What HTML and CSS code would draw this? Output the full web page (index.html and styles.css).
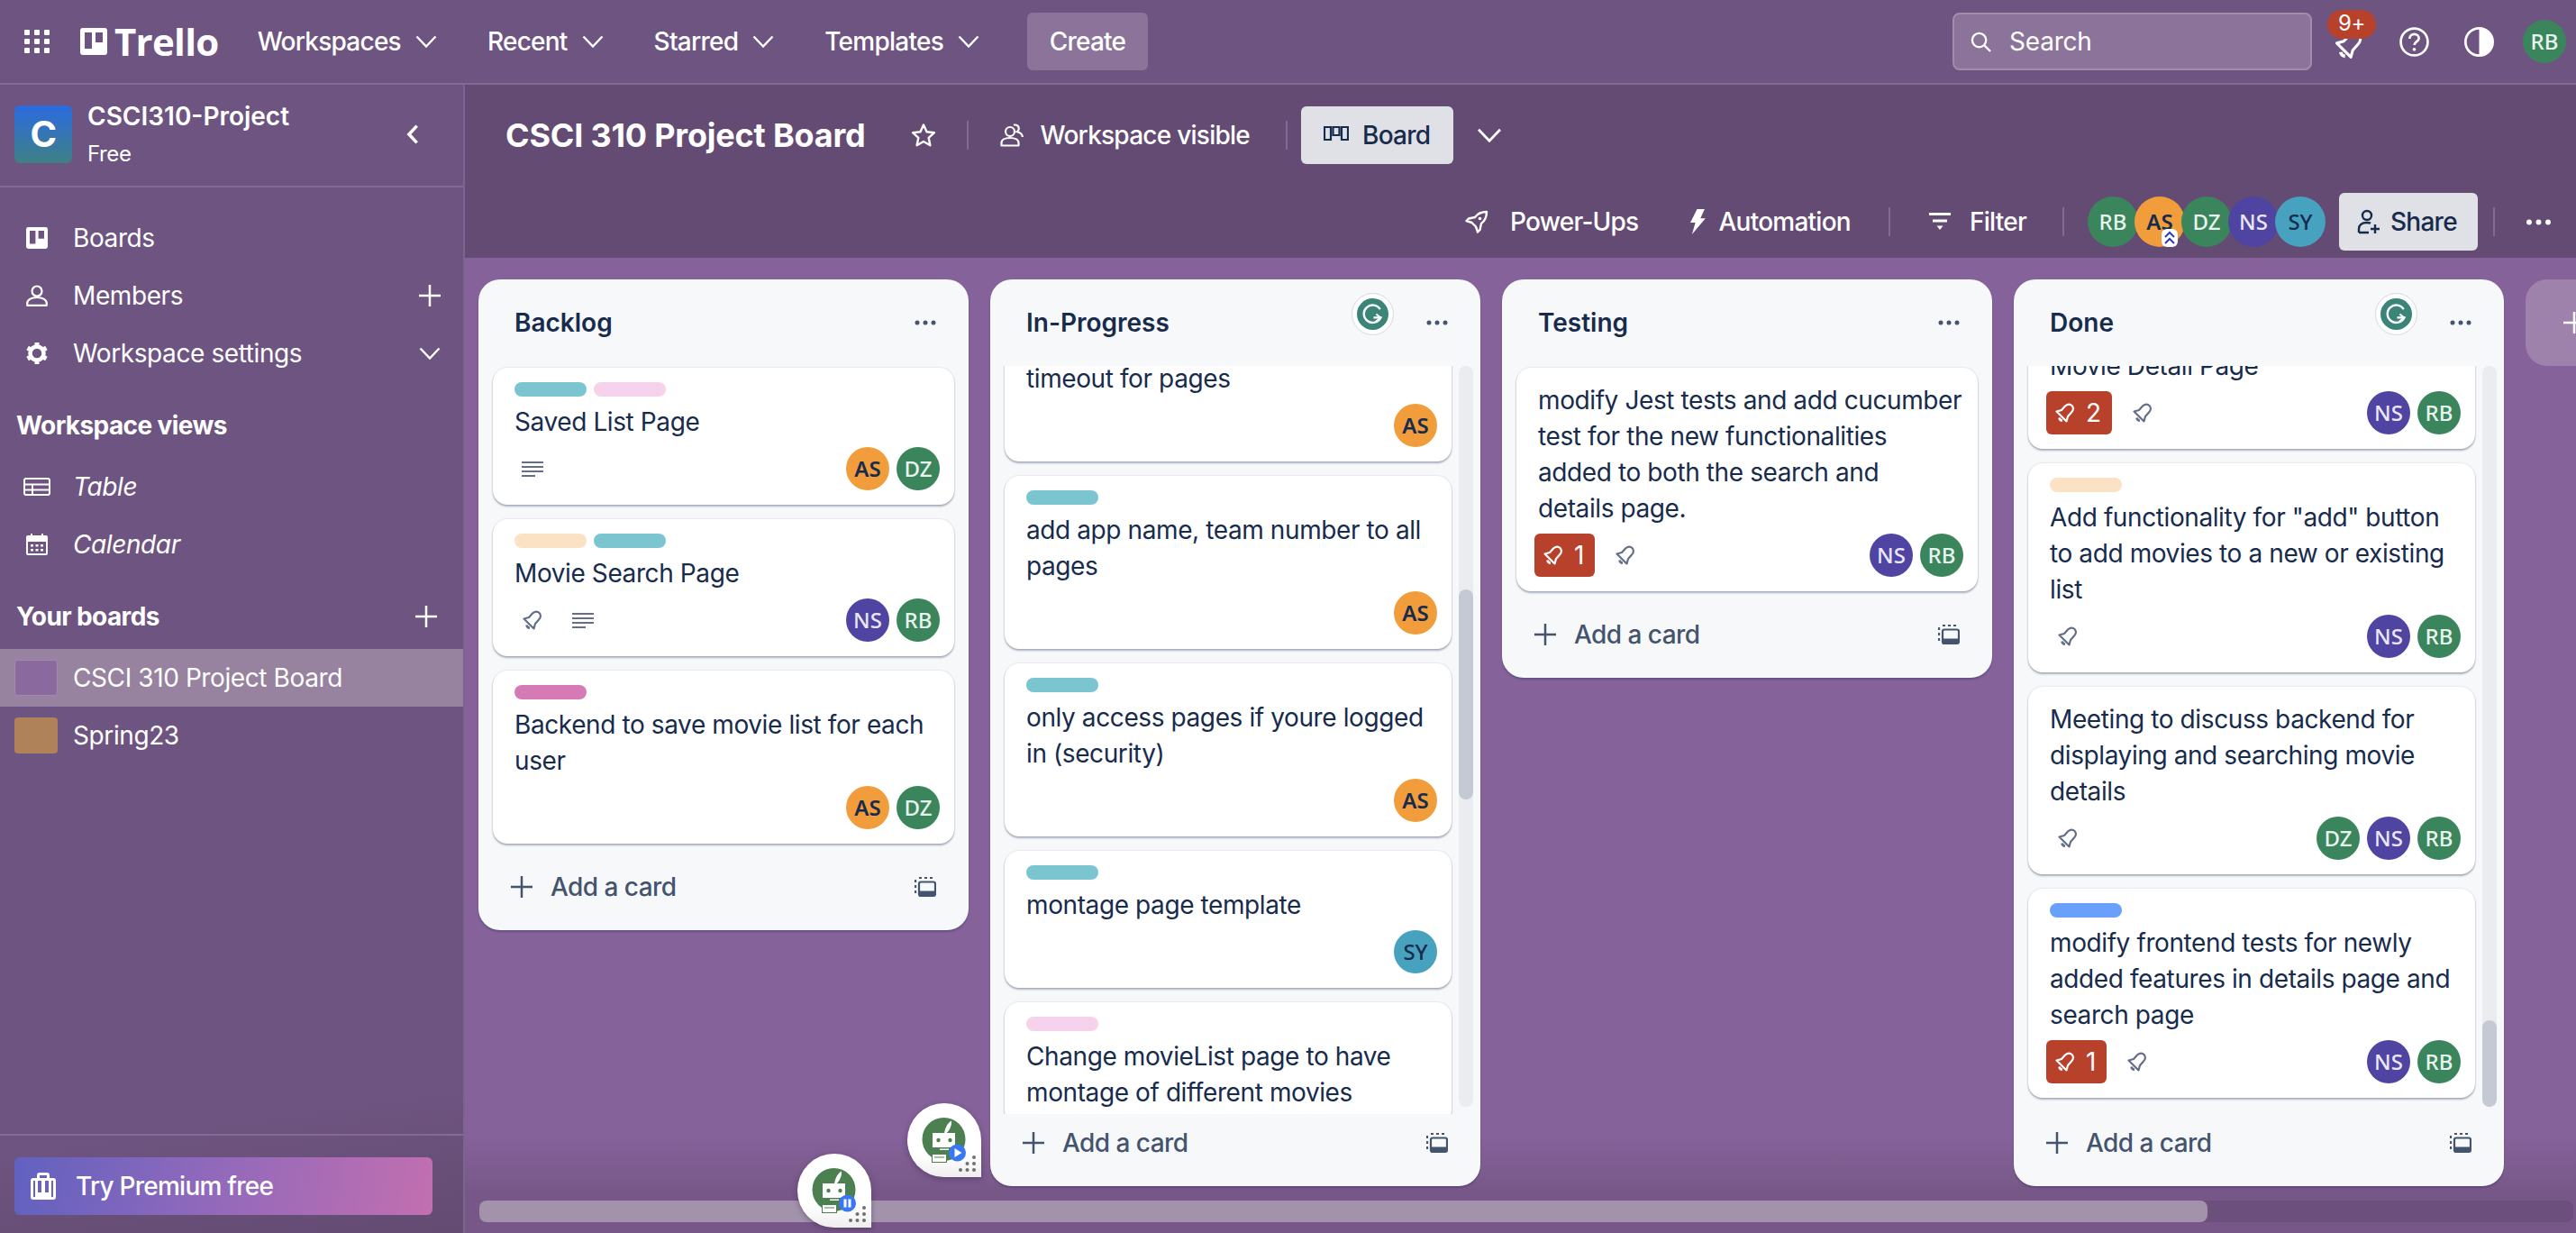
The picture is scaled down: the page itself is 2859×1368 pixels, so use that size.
FILE: index.html
```html
<!DOCTYPE html>
<html lang="en">

<head>
    <meta charset="UTF-8">
    <title>CSCI 310 Project Board | Trello</title>
    <link rel="stylesheet" href="styles.css">
</head>

<body>
    <!-- Icon sprite -->
    <svg class="sprite" xmlns="http://www.w3.org/2000/svg">
        <symbol id="i-chevron" viewBox="0 0 24 14"><path d="M1.500 1.500 12 12.500 22.500 1.500" fill="none" stroke="currentColor" stroke-width="2.400"/></symbol>
        <symbol id="i-plus" viewBox="0 0 24 24"><path d="M12 0v24M0 12h24" fill="none" stroke="currentColor" stroke-width="2.500"/></symbol>
        <symbol id="i-dots" viewBox="0 0 24 6"><circle cx="3" cy="3" r="2.500" fill="currentColor"/><circle cx="12" cy="3" r="2.500" fill="currentColor"/><circle cx="21" cy="3" r="2.500" fill="currentColor"/></symbol>
        <symbol id="i-bell" viewBox="0 0 24 24"><path d="M2.500 10.500 8 9l4-4.500c2.500-2.500 5.500-2.500 7.500-.5s2 5-.5 7.500L15 16l-1.500 5.500z" fill="none" stroke="currentColor" stroke-width="2.200" stroke-linejoin="round"/><path d="M5.500 17.500c.3 2 1.500 3 3.500 3.200" fill="none" stroke="currentColor" stroke-width="2.600"/></symbol>
        <symbol id="i-desc" viewBox="0 0 24 18"><path d="M0 2h24M0 7h24M0 12h24M0 17h15" fill="none" stroke="currentColor" stroke-width="2"/></symbol>
        <symbol id="i-template" viewBox="0 0 24 24"><rect x="5" y="6.500" width="18" height="15.500" rx="2" fill="none" stroke="currentColor" stroke-width="2.200"/><rect x="5" y="16.500" width="18" height="5.500" rx="1" fill="currentColor"/><path d="M1 4v3M1 10v3M1 16v3M5 2h3M11 2h3M17 2h3" fill="none" stroke="currentColor" stroke-width="2.200"/></symbol>
        <symbol id="i-mark" viewBox="0 0 30 30"><path fill-rule="evenodd" d="M3 0h24a3 3 0 0 1 3 3v24a3 3 0 0 1-3 3H3a3 3 0 0 1-3-3V3a3 3 0 0 1 3-3zm2 5v18h8V5zm12 0v11h8V5z" fill="currentColor"/></symbol>
        <symbol id="i-person" viewBox="0 0 24 24"><circle cx="12" cy="7" r="5.500" fill="none" stroke="currentColor" stroke-width="2.200"/><path d="M1.200 22.800v-2c0-4 4-6.800 10.800-6.800s10.800 2.800 10.800 6.800v2z" fill="none" stroke="currentColor" stroke-width="2.200" stroke-linejoin="round"/></symbol>
        <symbol id="i-gear" viewBox="0 0 24 24"><circle cx="12" cy="12" r="7.500" fill="none" stroke="currentColor" stroke-width="4.500"/><path d="M12 0v4M12 20v4M1.600 6l3.500 2M18.900 16l3.500 2M1.600 18l3.500-2M18.900 8l3.500-2" stroke="currentColor" stroke-width="5"/></symbol>
        <symbol id="i-table" viewBox="0 0 30 20"><rect x="1" y="1" width="28" height="18" rx="2" fill="none" stroke="currentColor" stroke-width="2"/><path d="M1 7.500h28M1 13.500h28M10 7.500v11" fill="none" stroke="currentColor" stroke-width="2"/></symbol>
        <symbol id="i-calendar" viewBox="0 0 24 24"><path fill-rule="evenodd" d="M2 2h3V0h2v2h10V0h2v2h3a2 2 0 0 1 2 2v18a2 2 0 0 1-2 2H2a2 2 0 0 1-2-2V4a2 2 0 0 1 2-2zm0 7v13h20V9z" fill="currentColor"/><path d="M5 12h3v2.500H5zm5.500 0h3v2.500h-3zm5.500 0h3v2.500h-3zM5 17h3v2.500H5zm5.500 0h3v2.500h-3zm5.500 0h3v2.500h-3z" fill="currentColor"/></symbol>
        <symbol id="i-search" viewBox="0 0 24 24"><circle cx="10" cy="10" r="8" fill="none" stroke="currentColor" stroke-width="2.400"/><path d="m16 16 7 7" stroke="currentColor" stroke-width="2.400"/></symbol>
        <symbol id="i-help" viewBox="0 0 32 32"><circle cx="16" cy="16" r="14.500" fill="none" stroke="currentColor" stroke-width="2.600"/><path d="M11 12.500c0-3 2.200-4.800 5-4.800s5 1.800 5 4.300c0 3.700-5 3.500-5 7.500" fill="none" stroke="currentColor" stroke-width="2.600"/><circle cx="16" cy="24" r="1.800" fill="currentColor"/></symbol>
        <symbol id="i-theme" viewBox="0 0 32 32"><circle cx="16" cy="16" r="14.700" fill="none" stroke="currentColor" stroke-width="2.600"/><path d="M16 1a15 15 0 0 1 0 30z" fill="currentColor"/></symbol>
        <symbol id="i-star" viewBox="0 0 28 28"><path d="m14 2.500 3.500 7.700 8.400 1-6.200 5.700 1.700 8.300L14 21l-7.400 4.200 1.700-8.300-6.200-5.700 8.400-1z" fill="none" stroke="currentColor" stroke-width="2.400" stroke-linejoin="round"/></symbol>
        <symbol id="i-people" viewBox="0 0 26 26"><circle cx="11" cy="9" r="5" fill="none" stroke="currentColor" stroke-width="2.200"/><path d="M1.500 24.500v-3c0-3.500 4-5.500 9.500-5.500s9.500 2 9.500 5.500v3z" fill="none" stroke="currentColor" stroke-width="2.200" stroke-linejoin="round"/><path d="M15 1.800c3-1 5.800 1 5.800 3.800 0 1.600-.8 3-2 3.600 3.600.8 6 2.800 6 5.800" fill="none" stroke="currentColor" stroke-width="2.200"/></symbol>
        <symbol id="i-board" viewBox="0 0 28 20"><path d="M1 1h7v14H1zM10.500 1h7v9h-7zM20 1h7v14h-7z" fill="none" stroke="currentColor" stroke-width="2.200"/></symbol>
        <symbol id="i-rocket" viewBox="0 0 26 26"><path d="M24 2c-6 0-10 2-13 6L4 9.500 1.500 12l6 2 4.500 4.500 2 6 2.500-2.500 1.500-7c4-3 6-7 6-13z" fill="none" stroke="currentColor" stroke-width="2.400" stroke-linejoin="round"/><circle cx="16.500" cy="9.500" r="1.800" fill="currentColor"/></symbol>
        <symbol id="i-bolt" viewBox="0 0 20 30"><path d="M10 0h9l-5 11h6L4 30l4-14H2z" fill="currentColor"/></symbol>
        <symbol id="i-filter" viewBox="0 0 24 20"><path d="M0 1.500h24M4 9h16" stroke="currentColor" stroke-width="3"/><path d="M8.500 14.500h7L12 19z" fill="currentColor"/></symbol>
        <symbol id="i-share" viewBox="0 0 26 28"><circle cx="11" cy="7" r="5" fill="none" stroke="currentColor" stroke-width="2.400"/><path d="M2 26v-4c0-4 3-7 9-7 1.500 0 3 .2 4 .8M2 26h11" fill="none" stroke="currentColor" stroke-width="2.400"/><path d="M20 17v10M15 22h10" stroke="currentColor" stroke-width="2.400"/></symbol>
        <symbol id="i-bag" viewBox="0 0 28 30"><path fill-rule="evenodd" d="M3 6h4V3a3 3 0 0 1 3-3h8a3 3 0 0 1 3 3v3h4a3 3 0 0 1 3 3v18a3 3 0 0 1-3 3H3a3 3 0 0 1-3-3V9a3 3 0 0 1 3-3zm7-3v3h8V3zM3 9v18h2V9zm5 0v13h4V9zm8 0v13h4V9zm7 0v18h2V9z" fill="currentColor"/></symbol>
        <symbol id="i-robot" viewBox="0 0 81 82"><circle cx="40.500" cy="40" r="24" fill="#4c8050"/><path d="M41 34c.5-6 3.500-12 8-14.500.5 5-2 11-6.500 14.500z" fill="#fff"/><rect x="28" y="33" width="25" height="16" fill="#fff"/><circle cx="34.500" cy="41" r="2.200" fill="#4c8050"/><circle cx="47.500" cy="41" r="2.200" fill="#4c8050"/><rect x="36" y="50.500" width="10" height="1.500" fill="#fff"/><rect x="27.500" y="56.500" width="16" height="9" fill="#fff" stroke="#4c8050" stroke-width="1"/><path d="M30 60h11" stroke="#4c8050"/><g fill="#6f6f6f"><circle cx="74" cy="60" r="2"/><circle cx="66.500" cy="67" r="2"/><circle cx="74" cy="67" r="2"/><circle cx="59" cy="74" r="2"/><circle cx="66.500" cy="74" r="2"/><circle cx="74" cy="74" r="2"/></g><circle cx="55.500" cy="55" r="9.500" fill="#3978f2"/></symbol>
    </svg>

    <header class="topbar">
        <div class="app-grid"><i></i><i></i><i></i><i></i><i></i><i></i><i></i><i></i><i></i></div>
        <div class="logo">
            <svg class="logo-mark"><use href="#i-mark"/></svg>
            <span class="logo-text">Trello</span>
        </div>
        <nav class="topnav">
            <span class="topnav-item">Workspaces <svg class="chevron"><use href="#i-chevron"/></svg></span>
            <span class="topnav-item">Recent <svg class="chevron"><use href="#i-chevron"/></svg></span>
            <span class="topnav-item">Starred <svg class="chevron"><use href="#i-chevron"/></svg></span>
            <span class="topnav-item">Templates <svg class="chevron"><use href="#i-chevron"/></svg></span>
        </nav>
        <button class="create-btn">Create</button>

        <div class="search">
            <svg class="search-icon"><use href="#i-search"/></svg>
            <span>Search</span>
        </div>
        <div class="top-icon bell-wrap">
            <svg class="icon-bell-top"><use href="#i-bell"/></svg>
            <span class="notify-count">9+</span>
        </div>
        <div class="top-icon"><svg class="icon-32"><use href="#i-help"/></svg></div>
        <div class="top-icon"><svg class="icon-32"><use href="#i-theme"/></svg></div>
        <span class="avatar avatar-green avatar-me">RB</span>
    </header>

    <div class="main">
        <aside class="sidebar">
            <div class="side-head">
                <div class="ws-tile">C</div>
                <div class="ws-info">
                    <div class="ws-name">CSCI310-Project</div>
                    <div class="ws-plan">Free</div>
                </div>
                <div class="collapse-btn"><svg class="collapse-icon" viewBox="0 0 12 20"><path d="M10 2 2.500 10l7.500 8" fill="none" stroke="currentColor" stroke-width="3"/></svg></div>
            </div>

            <div class="side-nav">
                <div class="side-row"><svg class="side-icon"><use href="#i-mark"/></svg>Boards</div>
                <div class="side-row"><svg class="side-icon"><use href="#i-person"/></svg>Members<svg class="side-end"><use href="#i-plus"/></svg></div>
                <div class="side-row"><svg class="side-icon"><use href="#i-gear"/></svg>Workspace settings<svg class="side-end side-end-chevron"><use href="#i-chevron"/></svg></div>

                <div class="side-title">Workspace views</div>
                <div class="side-row side-italic"><svg class="side-icon side-icon-wide"><use href="#i-table"/></svg>Table</div>
                <div class="side-row side-italic"><svg class="side-icon"><use href="#i-calendar"/></svg>Calendar</div>

                <div class="side-title">Your boards<svg class="side-end side-end-title"><use href="#i-plus"/></svg></div>
                <div class="side-row board-row board-row-active"><span class="board-tile tile-purple"></span>CSCI 310 Project Board</div>
                <div class="side-row board-row"><span class="board-tile tile-tan"></span>Spring23</div>
            </div>

            <div class="side-foot">
                <div class="premium-btn"><svg class="premium-icon"><use href="#i-bag"/></svg>Try Premium free</div>
            </div>
        </aside>

        <section class="board">
            <div class="board-head">
                <div class="head-row">
                    <h1 class="board-name">CSCI 310 Project Board</h1>
                    <svg class="star-icon"><use href="#i-star"/></svg>
                    <span class="head-divider divider-star"></span>
                    <svg class="people-icon"><use href="#i-people"/></svg>
                    <span class="head-text">Workspace visible</span>
                    <span class="head-divider divider-visible"></span>
                    <div class="board-btn"><svg class="board-icon"><use href="#i-board"/></svg>Board</div>
                    <svg class="chevron view-chevron"><use href="#i-chevron"/></svg>
                </div>
                <div class="head-row head-row-right">
                    <svg class="tool-icon"><use href="#i-rocket"/></svg>
                    <span class="head-text">Power-Ups</span>
                    <svg class="bolt-icon"><use href="#i-bolt"/></svg>
                    <span class="head-text">Automation</span>
                    <span class="head-divider divider-auto"></span>
                    <svg class="tool-icon filter-icon"><use href="#i-filter"/></svg>
                    <span class="head-text">Filter</span>
                    <span class="head-divider divider-filter"></span>
                    <div class="member-stack">
                        <span class="avatar avatar-green">RB</span>
                        <span class="avatar avatar-orange">AS
                            <span class="admin-badge"><svg viewBox="0 0 14 16"><path d="M2 7l5-5 5 5M2 14l5-5 5 5" fill="none" stroke="#2a3fb0" stroke-width="2"/></svg></span>
                        </span>
                        <span class="avatar avatar-green">DZ</span>
                        <span class="avatar avatar-purple">NS</span>
                        <span class="avatar avatar-teal">SY</span>
                    </div>
                    <div class="share-btn"><svg class="share-icon"><use href="#i-share"/></svg>Share</div>
                    <span class="head-divider divider-share"></span>
                    <svg class="head-dots"><use href="#i-dots"/></svg>
                </div>
            </div>

            <div class="canvas">
                <!-- Backlog -->
                <div class="list">
                    <div class="list-head"><span class="list-title">Backlog</span><svg class="list-dots"><use href="#i-dots"/></svg></div>
                    <div class="cards">
                        <div class="card">
                            <div class="labels"><span class="label l-teal"></span><span class="label l-pink"></span></div>
                            <div class="card-title">Saved List Page</div>
                            <div class="card-meta">
                                <div class="badges"><svg class="desc-icon"><use href="#i-desc"/></svg></div>
                                <div class="members"><span class="avatar avatar-orange">AS</span><span class="avatar avatar-green">DZ</span></div>
                            </div>
                        </div>
                        <div class="card">
                            <div class="labels"><span class="label l-peach"></span><span class="label l-teal"></span></div>
                            <div class="card-title">Movie Search Page</div>
                            <div class="card-meta">
                                <div class="badges"><svg class="bell-icon"><use href="#i-bell"/></svg><svg class="desc-icon"><use href="#i-desc"/></svg></div>
                                <div class="members"><span class="avatar avatar-purple">NS</span><span class="avatar avatar-green">RB</span></div>
                            </div>
                        </div>
                        <div class="card">
                            <div class="labels"><span class="label l-magenta"></span></div>
                            <div class="card-title">Backend to save movie list for each user</div>
                            <div class="card-meta">
                                <div class="badges"></div>
                                <div class="members"><span class="avatar avatar-orange">AS</span><span class="avatar avatar-green">DZ</span></div>
                            </div>
                        </div>
                    </div>
                    <div class="add-card"><svg class="add-plus"><use href="#i-plus"/></svg><span>Add a card</span><svg class="add-template"><use href="#i-template"/></svg></div>
                </div>

                <!-- In-Progress -->
                <div class="list list-tall">
                    <div class="list-head"><span class="list-title">In-Progress</span><svg class="list-dots"><use href="#i-dots"/></svg></div>
                    <div class="grammar-btn"><svg viewBox="0 0 36 36"><circle cx="18" cy="18" r="18" fill="#3a8577"/><path d="M26.500 12.500A10 10 0 1 0 27 22h-8" fill="none" stroke="#fff" stroke-width="2.500"/><path d="m22 18 5 4-5 4" fill="none" stroke="#fff" stroke-width="2"/></svg></div>
                    <div class="list-body">
                        <div class="cards cards-scroll progress-cards">
                            <div class="card">
                                <div class="card-title">timeout for pages</div>
                                <div class="card-meta">
                                    <div class="badges"></div>
                                    <div class="members"><span class="avatar avatar-orange">AS</span></div>
                                </div>
                            </div>
                            <div class="card">
                                <div class="labels"><span class="label l-teal"></span></div>
                                <div class="card-title">add app name, team number to all pages</div>
                                <div class="card-meta">
                                    <div class="badges"></div>
                                    <div class="members"><span class="avatar avatar-orange">AS</span></div>
                                </div>
                            </div>
                            <div class="card">
                                <div class="labels"><span class="label l-teal"></span></div>
                                <div class="card-title">only access pages if youre logged in (security)</div>
                                <div class="card-meta">
                                    <div class="badges"></div>
                                    <div class="members"><span class="avatar avatar-orange">AS</span></div>
                                </div>
                            </div>
                            <div class="card">
                                <div class="labels"><span class="label l-teal"></span></div>
                                <div class="card-title">montage page template</div>
                                <div class="card-meta">
                                    <div class="badges"></div>
                                    <div class="members"><span class="avatar avatar-teal">SY</span></div>
                                </div>
                            </div>
                            <div class="card">
                                <div class="labels"><span class="label l-pink"></span></div>
                                <div class="card-title">Change movieList page to have montage of different movies</div>
                            </div>
                        </div>
                        <div class="scroll-track"><div class="scroll-thumb thumb-progress"></div></div>
                    </div>
                    <div class="add-card"><svg class="add-plus"><use href="#i-plus"/></svg><span>Add a card</span><svg class="add-template"><use href="#i-template"/></svg></div>
                </div>

                <!-- Testing -->
                <div class="list">
                    <div class="list-head"><span class="list-title">Testing</span><svg class="list-dots"><use href="#i-dots"/></svg></div>
                    <div class="cards">
                        <div class="card card-nolabel">
                            <div class="card-title">modify Jest tests and add cucumber test for the new functionalities added to both the search and<br>details page.</div>
                            <div class="card-meta">
                                <div class="badges"><span class="due-badge"><svg class="bell-small"><use href="#i-bell"/></svg>1</span><svg class="bell-icon"><use href="#i-bell"/></svg></div>
                                <div class="members"><span class="avatar avatar-purple">NS</span><span class="avatar avatar-green">RB</span></div>
                            </div>
                        </div>
                    </div>
                    <div class="add-card"><svg class="add-plus"><use href="#i-plus"/></svg><span>Add a card</span><svg class="add-template"><use href="#i-template"/></svg></div>
                </div>

                <!-- Done -->
                <div class="list list-tall">
                    <div class="list-head"><span class="list-title">Done</span><svg class="list-dots"><use href="#i-dots"/></svg></div>
                    <div class="grammar-btn"><svg viewBox="0 0 36 36"><circle cx="18" cy="18" r="18" fill="#3a8577"/><path d="M26.500 12.500A10 10 0 1 0 27 22h-8" fill="none" stroke="#fff" stroke-width="2.500"/><path d="m22 18 5 4-5 4" fill="none" stroke="#fff" stroke-width="2"/></svg></div>
                    <div class="list-body">
                        <div class="cards cards-scroll done-cards">
                            <div class="card card-nolabel">
                                <div class="card-title">Movie Detail Page</div>
                                <div class="card-meta">
                                    <div class="badges"><span class="due-badge"><svg class="bell-small"><use href="#i-bell"/></svg>2</span><svg class="bell-icon"><use href="#i-bell"/></svg></div>
                                    <div class="members"><span class="avatar avatar-purple">NS</span><span class="avatar avatar-green">RB</span></div>
                                </div>
                            </div>
                            <div class="card">
                                <div class="labels"><span class="label l-peach"></span></div>
                                <div class="card-title">Add functionality for "add" button to add movies to a new or existing list</div>
                                <div class="card-meta">
                                    <div class="badges"><svg class="bell-icon"><use href="#i-bell"/></svg></div>
                                    <div class="members"><span class="avatar avatar-purple">NS</span><span class="avatar avatar-green">RB</span></div>
                                </div>
                            </div>
                            <div class="card card-nolabel">
                                <div class="card-title">Meeting to discuss backend for displaying and searching movie details</div>
                                <div class="card-meta">
                                    <div class="badges"><svg class="bell-icon"><use href="#i-bell"/></svg></div>
                                    <div class="members"><span class="avatar avatar-green">DZ</span><span class="avatar avatar-purple">NS</span><span class="avatar avatar-green">RB</span></div>
                                </div>
                            </div>
                            <div class="card">
                                <div class="labels"><span class="label l-blue"></span></div>
                                <div class="card-title">modify frontend tests for newly added features in details page and search page</div>
                                <div class="card-meta">
                                    <div class="badges"><span class="due-badge"><svg class="bell-small"><use href="#i-bell"/></svg>1</span><svg class="bell-icon"><use href="#i-bell"/></svg></div>
                                    <div class="members"><span class="avatar avatar-purple">NS</span><span class="avatar avatar-green">RB</span></div>
                                </div>
                            </div>
                        </div>
                        <div class="scroll-track"><div class="scroll-thumb thumb-done"></div></div>
                    </div>
                    <div class="add-card"><svg class="add-plus"><use href="#i-plus"/></svg><span>Add a card</span><svg class="add-template"><use href="#i-template"/></svg></div>
                </div>

                <div class="add-list"><svg class="add-list-plus"><use href="#i-plus"/></svg></div>

                <div class="board-scroll"><div class="board-scroll-thumb"></div></div>
            </div>
        </section>
    </div>

    <!-- Floating extension buttons -->
    <div class="bot bot-play">
        <svg class="bot-art" viewBox="0 0 81 82"><use href="#i-robot"/><path d="M52.500 50v10l8-5z" fill="#fff"/></svg>
    </div>
    <div class="bot bot-pause">
        <svg class="bot-art" viewBox="0 0 81 82"><use href="#i-robot"/><path d="M51.500 50.500h3v9h-3zM56.500 50.500h3v9h-3z" fill="#fff"/></svg>
    </div>
</body>

</html>
```

FILE: styles.css
```css
/* Basic Reset */
* {
    margin: 0;
    padding: 0;
    box-sizing: border-box;
}

body {
    width: 2859px;
    height: 1368px;
    overflow: hidden;
    position: relative;
    display: flex;
    flex-direction: column;
    font-family: 'Inter', 'Liberation Sans', sans-serif;
    font-size: 28px;
    line-height: 40px;
    letter-spacing: -0.4px;
    color: #fff;
    background: #6e5480;
}

.sprite {
    display: none;
}

svg {
    display: block;
    flex-shrink: 0;
}

/* Top bar */
.topbar {
    height: 94px;
    flex-shrink: 0;
    display: flex;
    align-items: center;
    padding: 0 11px 0 27px;
    background: #6e5480;
    border-bottom: 2px solid #826a93;
}

.app-grid {
    width: 28px;
    display: grid;
    grid-template-columns: repeat(3, 6px);
    gap: 4px 5px;
}

.app-grid i {
    height: 6px;
    background: #fff;
    border-radius: 1px;
}

.logo {
    display: flex;
    align-items: center;
    margin-left: 34px;
    gap: 8px;
}

.logo-mark {
    width: 30px;
    height: 30px;
}

.logo-text {
    font-family: 'Open Sans', sans-serif;
    font-size: 42px;
    font-weight: 700;
    line-height: 44px;
    letter-spacing: -0.7px;
}

.topnav {
    display: flex;
    margin-left: 43px;
    gap: 56px;
}

.topnav-item {
    display: flex;
    align-items: center;
    gap: 16px;
    font-weight: 500;
    letter-spacing: -0.75px;
}

.chevron {
    width: 24px;
    height: 14px;
}

.create-btn {
    width: 134px;
    height: 64px;
    margin-left: 53px;
    border: none;
    border-radius: 6px;
    background: #8c7399;
    color: #fff;
    font: 500 28px 'Inter', sans-serif;
    letter-spacing: -0.75px;
}

.search {
    width: 399px;
    height: 64px;
    margin-left: auto;
    display: flex;
    align-items: center;
    gap: 20px;
    padding-left: 18px;
    border: 2px solid #a08dab;
    border-radius: 8px;
    background: #8c7399;
    letter-spacing: -0.2px;
}

.search-icon {
    width: 23px;
    height: 23px;
}

.top-icon {
    width: 72px;
    height: 64px;
    display: flex;
    align-items: center;
    justify-content: center;
}

.bell-wrap {
    position: relative;
    margin-left: 5px;
}

.icon-bell-top {
    width: 34px;
    height: 34px;
    margin-top: 8px;
}

.notify-count {
    position: absolute;
    left: 12px;
    top: -3px;
    width: 54px;
    height: 32px;
    border-radius: 16px;
    background: #b8412b;
    font-size: 24px;
    line-height: 30px;
    text-align: center;
}

.icon-32 {
    width: 33px;
    height: 33px;
}

.avatar {
    width: 48px;
    height: 48px;
    flex-shrink: 0;
    display: flex;
    align-items: center;
    justify-content: center;
    border-radius: 50%;
    font-family: 'Noto Sans', sans-serif;
    font-size: 24px;
    font-weight: 500;
    line-height: 1;
    letter-spacing: 0;
}

.avatar-green {
    background: #3b855c;
    color: #e8f5ee;
}

.avatar-orange {
    background: #f29d3c;
    color: #172b4d;
    font-weight: 600;
}

.avatar-purple {
    background: #5044a3;
    color: #e9e7f8;
}

.avatar-teal {
    background: #46a2bf;
    color: #172b4d;
}

.avatar-me {
    margin-left: 13px;
}

/* Layout */
.main {
    flex: 1;
    display: flex;
    min-height: 0;
}

.sidebar {
    width: 516px;
    flex-shrink: 0;
    display: flex;
    flex-direction: column;
    background: linear-gradient(172deg, #6e5480 88%, #634b72 100%);
    border-right: 2px solid #7d6490;
}

.side-head {
    height: 114px;
    display: flex;
    align-items: center;
    padding: 0 29px 2px 16px;
    border-bottom: 2px solid #826a93;
}

.ws-tile {
    width: 64px;
    height: 64px;
    border-radius: 6px;
    background: linear-gradient(#2b6bdf, #3f8086);
    font-size: 40px;
    font-weight: 700;
    line-height: 64px;
    text-align: center;
}

.ws-info {
    margin-left: 17px;
    padding-top: 2px;
    flex: 1;
}

.ws-name {
    font-weight: 600;
    line-height: 38px;
    letter-spacing: 0;
}

.ws-plan {
    font-size: 24px;
    line-height: 40px;
    margin-top: 3px;
}

.collapse-btn {
    width: 54px;
    height: 54px;
    display: flex;
    align-items: center;
    justify-content: center;
    border-radius: 6px;
}

.collapse-icon {
    width: 14px;
    height: 24px;
}

.side-nav {
    padding-top: 24px;
}

.side-row {
    height: 64px;
    display: flex;
    align-items: center;
    padding-right: 25px;
}

.side-icon {
    width: 24px;
    height: 24px;
    margin: 0 28px 0 29px;
}

.side-icon-wide {
    width: 30px;
    height: 20px;
    margin: 0 25px 0 26px;
}

.side-end {
    width: 24px;
    height: 24px;
    margin-left: auto;
}

.side-end-chevron {
    height: 14px;
}

.side-italic {
    font-style: italic;
}

.side-title {
    height: 64px;
    margin: 16px 0 4px;
    display: flex;
    align-items: center;
    padding: 0 29px 0 18px;
    font-weight: 700;
    letter-spacing: -0.6px;
}

.board-row-active {
    background: #97829f;
}

.board-tile {
    width: 48px;
    height: 40px;
    margin: 0 17px 0 16px;
    border-radius: 4px;
    flex-shrink: 0;
}

.tile-purple {
    background: #8a6a9e;
    border: 1px solid #a08dab;
}

.tile-tan {
    background: #af8259;
}

.side-foot {
    margin-top: auto;
    height: 110px;
    padding: 24px 16px 0;
    border-top: 2px solid #826a93;
}

.premium-btn {
    width: 464px;
    height: 64px;
    display: flex;
    align-items: center;
    padding-left: 18px;
    border-radius: 6px;
    background: linear-gradient(100deg, #6161c0, #8f69bb 45%, #c26fb0);
    font-weight: 500;
    letter-spacing: -0.75px;
}

.premium-icon {
    width: 28px;
    height: 30px;
    margin-right: 22px;
}

/* Board header */
.board {
    flex: 1;
    min-width: 0;
    display: flex;
    flex-direction: column;
}

.board-head {
    height: 192px;
    flex-shrink: 0;
    padding-top: 24px;
    background: #644b73;
}

.head-row {
    height: 64px;
    display: flex;
    align-items: center;
    padding-left: 45px;
    font-weight: 500;
    letter-spacing: -0.75px;
}

.head-row-right {
    margin-top: 32px;
    justify-content: flex-end;
    padding-right: 26px;
}

.board-name {
    font-size: 36px;
    font-weight: 700;
    line-height: 48px;
    letter-spacing: -0.2px;
}

.star-icon {
    width: 28px;
    height: 28px;
    margin-left: 50px;
}

.head-divider {
    width: 2px;
    height: 32px;
    background: #826a93;
}

.divider-star {
    margin: 0 35px 0 34px;
}

.people-icon {
    width: 26px;
    height: 26px;
    margin-right: 19px;
}

.divider-visible {
    margin: 0 15px 0 40px;
}

.board-btn {
    width: 169px;
    height: 64px;
    display: flex;
    align-items: center;
    gap: 15px;
    padding-left: 25px;
    border-radius: 6px;
    background: #dfe1e6;
    color: #172b4d;
}

.board-icon {
    width: 28px;
    height: 20px;
}

.view-chevron {
    width: 28px;
    height: 16px;
    margin-left: 26px;
}

.tool-icon {
    width: 26px;
    height: 26px;
    margin-right: 24px;
}

.bolt-icon {
    width: 19px;
    height: 28px;
    margin: 0 14px 0 56px;
}

.divider-auto {
    margin: 0 43px 0 42px;
}

.filter-icon {
    width: 24px;
    height: 20px;
    margin-right: 21px;
}

.divider-filter {
    margin: 0 26px 0 40px;
}

.member-stack {
    display: flex;
}

.member-stack .avatar {
    width: 56px;
    height: 56px;
    margin-right: -4px;
    position: relative;
}

.admin-badge {
    position: absolute;
    left: 30px;
    bottom: 0;
    width: 18px;
    height: 20px;
    padding: 2px;
    background: #fff;
    border-radius: 6px;
}

.share-btn {
    width: 154px;
    height: 64px;
    margin-left: 19px;
    display: flex;
    align-items: center;
    gap: 11px;
    padding-left: 20px;
    border-radius: 6px;
    background: #dfe1e6;
    color: #172b4d;
}

.share-icon {
    width: 26px;
    height: 28px;
}

.divider-share {
    margin: 0 33px 0 17px;
}

.head-dots {
    width: 31px;
    height: 7px;
}

/* Lists */
.canvas {
    flex: 1;
    min-height: 0;
    position: relative;
    overflow: hidden;
    display: flex;
    align-items: flex-start;
    gap: 24px;
    padding: 24px 0 0 15px;
    background: linear-gradient(#85629a 90%, #775787 96%);
}

.list {
    width: 544px;
    flex-shrink: 0;
    position: relative;
    display: flex;
    flex-direction: column;
    padding-bottom: 16px;
    border-radius: 24px;
    background: #f7f8f9;
    box-shadow: 0 2px 2px rgba(9, 30, 66, 0.25);
    color: #172b4d;
}

.list-tall {
    height: 1006px;
}

.list-head {
    height: 96px;
    flex-shrink: 0;
    display: flex;
    align-items: center;
    justify-content: space-between;
    padding: 0 36px 0 40px;
}

.list-title {
    font-weight: 600;
    letter-spacing: 0;
}

.list-dots {
    width: 24px;
    height: 6px;
    color: #44546f;
}

.grammar-btn {
    position: absolute;
    right: 96px;
    top: 15px;
    width: 47px;
    height: 47px;
    padding: 5px;
    background: #fff;
    border: 1px solid #d5d9e0;
    border-radius: 50%;
}

.cards {
    display: flex;
    flex-direction: column;
    gap: 16px;
    padding: 2px 16px 0;
}

.list-body {
    flex: 1;
    min-height: 0;
    display: flex;
}

.cards-scroll {
    width: 520px;
    padding: 0 8px 0 16px;
    overflow: hidden;
}

.progress-cards .card:first-child {
    margin-top: -22px;
}

.done-cards .card:first-child {
    margin-top: -36px;
}

.card {
    flex-shrink: 0;
    padding: 16px 12px 16px 24px;
    border-radius: 16px;
    background: #fff;
    box-shadow: 0 0 2px rgba(9, 30, 66, 0.2), 0 2px 2px rgba(9, 30, 66, 0.3);
}

.labels {
    display: flex;
    gap: 8px;
    margin-bottom: 8px;
}

.label {
    width: 80px;
    height: 16px;
    border-radius: 8px;
}

.l-teal {
    background: #7ac5cf;
}

.l-pink {
    background: #f6d2ec;
}

.l-peach {
    background: #fbe2c4;
}

.l-magenta {
    background: #d67ab6;
}

.l-blue {
    background: #69a0fb;
}

.card-meta {
    margin-top: 8px;
    display: flex;
    justify-content: space-between;
    align-items: center;
}

.badges {
    display: flex;
    align-items: center;
    gap: 32px;
    padding-left: 8px;
    color: #626f86;
}

.bell-icon {
    width: 24px;
    height: 24px;
}

.desc-icon {
    width: 24px;
    height: 18px;
}

.due-badge {
    height: 48px;
    display: flex;
    align-items: center;
    gap: 11px;
    margin: 0 -10px 0 -12px;
    padding: 0 12px 0 9px;
    border-radius: 6px;
    background: #b8412b;
    color: #fff;
}

.bell-small {
    width: 24px;
    height: 24px;
}

.members {
    display: flex;
    gap: 8px;
    margin-right: 4px;
}

.add-card {
    height: 64px;
    flex-shrink: 0;
    display: flex;
    align-items: center;
    padding: 0 36px;
    margin-top: 16px;
    color: #44546f;
    font-weight: 500;
    letter-spacing: -0.55px;
}

.list-tall .add-card {
    margin-top: 0;
}

.add-plus {
    width: 24px;
    height: 24px;
    margin-right: 20px;
}

.add-template {
    width: 24px;
    height: 24px;
    margin-left: auto;
}

.scroll-track {
    width: 16px;
    height: 822px;
    border-radius: 8px;
    background: #eaecf0;
}

.scroll-thumb {
    width: 16px;
    border-radius: 8px;
    background: #c4c9d3;
}

.thumb-progress {
    height: 233px;
    margin-top: 248px;
}

.thumb-done {
    height: 96px;
    margin-top: 726px;
}

.add-list {
    width: 200px;
    height: 96px;
    flex-shrink: 0;
    display: flex;
    align-items: center;
    padding-left: 42px;
    border-radius: 24px;
    background: #9e82ab;
}

.add-list-plus {
    width: 24px;
    height: 24px;
}

.board-scroll {
    position: absolute;
    left: 16px;
    bottom: 12px;
    width: 2324px;
    height: 24px;
    border-radius: 8px;
    background: #6c4f7c;
}

.board-scroll-thumb {
    width: 1918px;
    height: 24px;
    border-radius: 8px;
    background: #a292ac;
}

/* Floating extension buttons */
.bot {
    position: absolute;
    width: 82px;
    height: 82px;
    border-radius: 50% 50% 0 50%;
    background: linear-gradient(#fff 70%, #eee);
    box-shadow: 0 2px 6px rgba(40, 20, 60, 0.35);
}

.bot-art {
    width: 81px;
    height: 82px;
}

.bot-play {
    left: 1007px;
    top: 1224px;
}

.bot-pause {
    left: 885px;
    top: 1280px;
}
```
